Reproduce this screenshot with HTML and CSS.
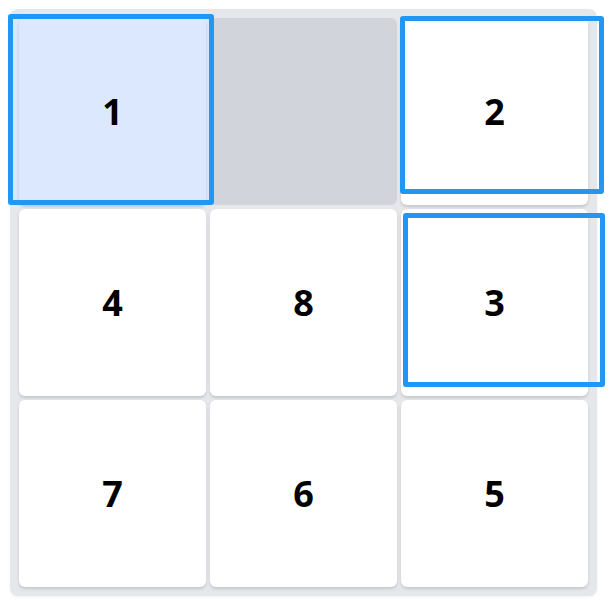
FILE: index.html
```html
<!DOCTYPE html>
<html lang="en">
<head>
    <meta charset="UTF-8">
    <meta name="viewport" content="width=device-width, initial-scale=1.0">
    <title>Sliding Puzzle</title>
    <link rel="stylesheet" href="styles.css">
</head>
<body>
    <div class="board">
        <div class="tile picked">1</div>
        <div class="tile empty"></div>
        <div class="tile">2</div>
        <div class="tile">4</div>
        <div class="tile">8</div>
        <div class="tile">3</div>
        <div class="tile">7</div>
        <div class="tile">6</div>
        <div class="tile">5</div>

        <!-- highlight boxes drawn over the board -->
        <div class="mark mark-one"></div>
        <div class="mark mark-two"></div>
        <div class="mark mark-three"></div>
    </div>
</body>
</html>
```

FILE: styles.css
```css
body {
    margin: 0;
    padding: 9px 10px;
    background: #ffffff;
    font-family: 'Noto Sans', 'Open Sans', sans-serif;
}

.board {
    position: relative;
    isolation: isolate;
    width: 587px;
    height: 587px;
    box-sizing: border-box;
    padding: 9px;
    display: grid;
    grid-template-columns: repeat(3, 1fr);
    grid-template-rows: repeat(3, 1fr);
    gap: 4px;
    background-color: #e5e7eb;
    border-radius: 8px;
    box-shadow: 0 1px 3px rgba(0, 0, 0, 0.06);
}

.tile {
    display: flex;
    justify-content: center;
    align-items: center;
    background-color: #ffffff;
    border-radius: 6px;
    box-shadow: 0 2px 3px rgba(0, 0, 0, 0.14);
    font-size: 36px;
    font-weight: 700;
    color: #000000;
}

.tile.picked {
    background-color: #dbe8fd;
}

.tile.empty {
    background-color: #d1d5db;
    box-shadow: none;
}

.mark {
    position: absolute;
    box-sizing: border-box;
    border: 5px solid #2196f3;
    border-radius: 3px;
}

/* tinted fill sits under the tiles, the frame stays on top */
.mark-one::before {
    content: '';
    position: absolute;
    inset: -5px;
    z-index: -1;
    border-radius: 3px;
    background-color: #d9e6fb;
}

.mark-one {
    left: -2px;
    top: 5px;
    width: 206px;
    height: 191px;
}

.mark-two {
    left: 390px;
    top: 7px;
    width: 204px;
    height: 178px;
}

.mark-three {
    left: 393px;
    top: 204px;
    width: 202px;
    height: 174px;
}
```
